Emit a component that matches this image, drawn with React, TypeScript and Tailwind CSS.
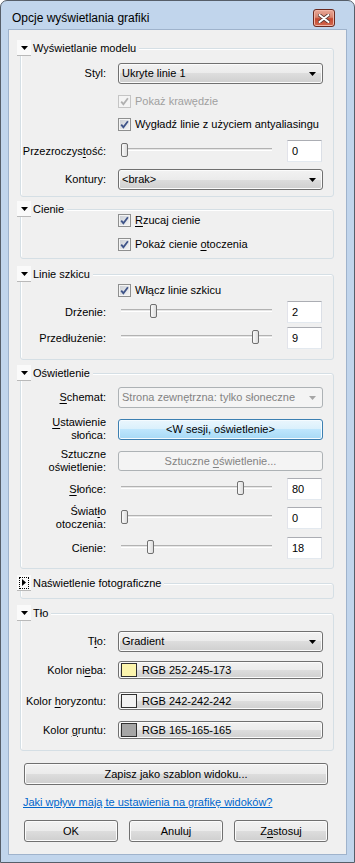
import React from "react";

const btnGrad =
  "bg-[linear-gradient(#f2f2f2,#ebebeb_50%,#dddddd_50%,#cfcfcf)] border-[#707070] shadow-[inset_0_0_0_1px_#fbfbfb]";

function U({ children }: { children: React.ReactNode }) {
  return <span className="underline underline-offset-2">{children}</span>;
}

function Check({ label, disabled }: { label: React.ReactNode; disabled?: boolean }) {
  return (
    <div className={`flex h-[16px] items-center ${disabled ? "text-[#a0a0a0]" : "text-black"}`}>
      <span
        className={`flex h-[13px] w-[13px] shrink-0 items-center justify-center border ${
          disabled
            ? "border-[#c5c5c5] bg-[#f4f4f4]"
            : "border-[#8e8f8f] bg-[linear-gradient(135deg,#c8ccd2,#f7f7f7)] shadow-[inset_0_0_0_1px_#f4f4f4]"
        }`}
      >
        <svg width="9" height="9" viewBox="0 0 9 9">
          <path
            d="M1.2 4.6 L3.4 7.2 L7.9 1.2"
            fill="none"
            stroke={disabled ? "#b0b0b0" : "#3f5489"}
            strokeWidth="1.8"
          />
        </svg>
      </span>
      <span className="ml-[4px]">{label}</span>
    </div>
  );
}

function Select({ value, disabled }: { value: string; disabled?: boolean }) {
  return (
    <div
      className={`flex h-[21px] items-center justify-between rounded-[3px] border pl-[3px] pr-[6px] ${
        disabled ? "border-[#adb2b5] bg-[#f4f4f4] text-[#838383]" : `${btnGrad} text-black`
      }`}
    >
      <span>{value}</span>
      <svg width="7" height="4" viewBox="0 0 7 4">
        <path d="M0 0h7L3.5 4z" fill={disabled ? "#a6a6a6" : "#000"} />
      </svg>
    </div>
  );
}

function Slider({ value, max }: { value: number; max: number }) {
  const left = 3 + (value / max) * 145;
  return (
    <div className="relative h-[22px] w-[157px]">
      <div className="absolute left-[3px] right-[3px] top-[8px] h-[3px] border-t border-b border-t-[#b2b2b2] border-b-white bg-[#e6e6e6]" />
      <div
        className="absolute top-[3px] h-[14px] w-[7px] rounded-[2px] border border-[#707070] bg-[linear-gradient(90deg,#fafafa,#dcdcdc)]"
        style={{ left }}
      />
    </div>
  );
}

function Num({ v }: { v: string }) {
  return (
    <div className="flex h-[22px] w-[35px] items-center border border-[#abadb3] border-b-[#e3e9ef] border-l-[#e2e3ea] border-r-[#dbdfe6] bg-white pl-[4px]">
      {v}
    </div>
  );
}

function SliderRow({ label, value, max, tall }: { label: React.ReactNode; value: number; max: number; tall?: boolean }) {
  return (
    <Row label={label} tall={tall}>
      <div className="flex items-center">
        <Slider value={value} max={max} />
        <div className="ml-[12px]">
          <Num v={String(value)} />
        </div>
      </div>
    </Row>
  );
}

function Row({
  label,
  children,
  tall,
  className = "",
}: {
  label: React.ReactNode;
  children: React.ReactNode;
  tall?: boolean;
  className?: string;
}) {
  return (
    <div className={`flex items-center ${tall ? "h-[26px]" : ""} ${className}`}>
      <div className="w-[85px] shrink-0 text-right leading-[13px]">{label}</div>
      <div className="ml-[12px] mr-[10px] flex-1">{children}</div>
    </div>
  );
}

function Toggle({ collapsed }: { collapsed?: boolean }) {
  return (
    <div className="flex h-[16px] w-[14px] items-center justify-center border-b border-[#b9b9b9] bg-[#fafafa]">
      {collapsed ? (
        <div className="flex h-[12px] w-[10px] items-center justify-center border border-dotted border-black">
          <svg width="4" height="7" viewBox="0 0 4 7">
            <path d="M0 0L4 3.5L0 7z" fill="#000" />
          </svg>
        </div>
      ) : (
        <svg width="7" height="4" viewBox="0 0 7 4">
          <path d="M0 0h7L3.5 4z" fill="#000" />
        </svg>
      )}
    </div>
  );
}

function Group({
  title,
  collapsed,
  className = "",
  children,
}: {
  title: string;
  collapsed?: boolean;
  className?: string;
  children?: React.ReactNode;
}) {
  return (
    <div
      className={`relative ml-[11px] mr-[12px] rounded-[3px] border border-[#d5dfe5] shadow-[inset_1px_1px_0_#ffffff] ${className}`}
    >
      <div className="absolute -left-[4px] -top-[9px] flex h-[16px] items-center bg-[#f0f0f0] pr-[3px]">
        <Toggle collapsed={collapsed} />
        <span className="ml-[2px]">{title}</span>
      </div>
      {children}
    </div>
  );
}

function ColorBtn({ color, text }: { color: string; text: string }) {
  return (
    <div className={`flex h-[18px] items-center rounded-[3px] border pl-[2px] ${btnGrad}`}>
      <span className="h-[14px] w-[16px] border border-[#303030]" style={{ background: color }} />
      <span className="ml-[5px]">{text}</span>
    </div>
  );
}

function Btn({ children, className = "" }: { children: React.ReactNode; className?: string }) {
  return (
    <div className={`flex h-[22px] items-center justify-center rounded-[3px] border ${btnGrad} ${className}`}>
      {children}
    </div>
  );
}

export default function App() {
  return (
    <div className="flex h-[863px] w-[355px] flex-col rounded-t-[7px] border border-[#565e69] bg-[#c1d5ec] font-['Liberation_Sans',Arial,sans-serif] text-[11px] leading-[15px] text-black">
      <div className="flex h-[28px] shrink-0 items-start">
        <span className="ml-[11px] mt-[10px] text-[12px]">Opcje wyświetlania grafiki</span>
        <div className="ml-auto mr-[19px] mt-[8px] flex h-[18px] w-[22px] items-center justify-center rounded-[3px] border border-[#6b2a20] bg-[linear-gradient(#eaa898,#d88570_45%,#c5472e_55%,#d2694f)] shadow-[inset_0_0_0_1px_#f0b5a6]">
          <svg width="12" height="9" viewBox="0 0 12 9">
            <path d="M1.5 1L10.5 8M10.5 1L1.5 8" stroke="#5a3a36" strokeWidth="3.6" strokeLinecap="round" />
            <path d="M1.5 1L10.5 8M10.5 1L1.5 8" stroke="#ffffff" strokeWidth="2" strokeLinecap="round" />
          </svg>
        </div>
      </div>

      <div className="mx-[7px] flex flex-1 flex-col border border-[#9fb3cc] bg-[#f0f0f0] pb-[12px]">
        <Group title="Wyświetlanie modelu" className="mt-[18px] pb-[6px] pt-[14px]">
          <Row label="Styl:">
            <Select value="Ukryte linie 1" />
          </Row>
          <div className="ml-[97px] mt-[9px]">
            <Check label="Pokaż krawędzie" disabled />
          </div>
          <div className="ml-[97px] mt-[7px]">
            <Check label="Wygładź linie z użyciem antyaliasingu" />
          </div>
          <div className="mt-[8px]">
            <SliderRow
              label={
                <>
                  Przezroczys<U>t</U>ość:
                </>
              }
              value={0}
              max={100}
            />
          </div>
          <Row label="Kontury:" className="mt-[7px]">
            <Select value="<brak>" />
          </Row>
        </Group>

        <Group title="Cienie" className="mt-[12px] pb-[6px] pt-[2px]">
          <div className="ml-[97px]">
            <Check
              label={
                <>
                  <U>R</U>zucaj cienie
                </>
              }
            />
          </div>
          <div className="ml-[97px] mt-[8px]">
            <Check
              label={
                <>
                  Pokaż cienie <U>o</U>toczenia
                </>
              }
            />
          </div>
        </Group>

        <Group title="Linie szkicu" className="mt-[15px] pb-[10px] pt-[7px]">
          <div className="ml-[97px]">
            <Check label="Włącz linie szkicu" />
          </div>
          <div className="mt-[3px]">
            <SliderRow label="Drżenie:" value={2} max={10} />
          </div>
          <div className="mt-[4px]">
            <SliderRow label="Przedłużenie:" value={9} max={10} />
          </div>
        </Group>

        <Group title="Oświetlenie" className="mt-[13px] pb-[9px] pt-[13px]">
          <Row
            label={
              <>
                <U>S</U>chemat:
              </>
            }
          >
            <Select value="Strona zewnętrzna: tylko słoneczne" disabled />
          </Row>
          <Row
            tall
            className="mt-[8px]"
            label={
              <>
                <U>U</U>stawienie
                <br />
                słońca:
              </>
            }
          >
            <div className="flex h-[21px] items-center justify-center rounded-[3px] border border-[#3c7fb1] bg-[linear-gradient(#eaf6fd,#d9f0fc_50%,#bee6fd_50%,#a7d9f5)] shadow-[inset_0_0_0_1px_#f4fbff]">
              &lt;W sesji, oświetlenie&gt;
            </div>
          </Row>
          <Row
            tall
            className="mt-[6px]"
            label={
              <>
                Sztuczne
                <br />
                oświetlenie:
              </>
            }
          >
            <div className="flex h-[20px] items-center justify-center rounded-[3px] border border-[#adb2b5] bg-[#f4f4f4] text-[#838383]">
              Sztuczne <span className="ml-[3px]"><U>o</U>świetlenie...</span>
            </div>
          </Row>
          <div className="mt-[4px]">
            <SliderRow
              label={
                <>
                  <U>S</U>łońce:
                </>
              }
              value={80}
              max={100}
            />
          </div>
          <div className="mt-[5px]">
            <SliderRow
              tall
              label={
                <>
                  Świat<U>ł</U>o
                  <br />
                  otoczenia:
                </>
              }
              value={0}
              max={100}
            />
          </div>
          <div className="mt-[6px]">
            <SliderRow label="Cienie:" value={18} max={100} />
          </div>
        </Group>

        <Group title="Naświetlenie fotograficzne" collapsed className="mt-[14px] h-[16px]" />

        <Group title="Tło" className="mt-[14px] pb-[11px] pt-[17px]">
          <Row
            label={
              <>
                T<U>ł</U>o:
              </>
            }
          >
            <Select value="Gradient" />
          </Row>
          <Row
            className="mt-[9px]"
            label={
              <>
                Kolor ni<U>e</U>ba:
              </>
            }
          >
            <ColorBtn color="rgb(252,245,173)" text="RGB 252-245-173" />
          </Row>
          <Row
            className="mt-[13px]"
            label={
              <>
                Kolor <U>h</U>oryzontu:
              </>
            }
          >
            <ColorBtn color="rgb(242,242,242)" text="RGB 242-242-242" />
          </Row>
          <Row
            className="mt-[11px]"
            label={
              <>
                Kolor <U>g</U>runtu:
              </>
            }
          >
            <ColorBtn color="rgb(165,165,165)" text="RGB 165-165-165" />
          </Row>
        </Group>

        <Btn className="ml-[15px] mt-[12px] w-[304px]">Zapisz jako szablon widoku...</Btn>

        <a href="#" className="ml-[14px] mt-[10px] h-[16px] text-[#0066cc] underline">
          Jaki wpływ mają te ustawienia na grafikę widoków?
        </a>

        <div className="ml-[15px] mt-[9px] flex w-[304px] justify-between">
          <Btn className="w-[94px]">OK</Btn>
          <Btn className="w-[94px]">Anuluj</Btn>
          <Btn className="w-[94px]">
            <span>
              Z<U>a</U>stosuj
            </span>
          </Btn>
        </div>
      </div>
      <div className="h-[7px] shrink-0" />
    </div>
  );
}
